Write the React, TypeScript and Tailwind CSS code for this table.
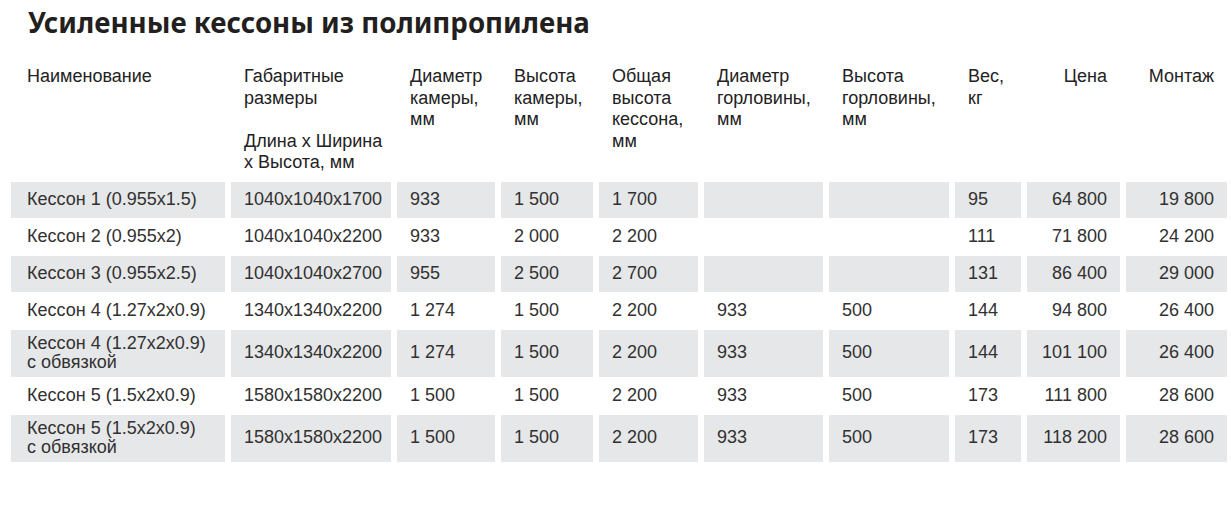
import React from 'react';

type Row = {
  name: string[];
  cells: string[];
};

const rows: Row[] = [
  { name: ['Кессон 1 (0.955x1.5)'], cells: ['1040x1040x1700', '933', '1 500', '1 700', '', '', '95', '64 800', '19 800'] },
  { name: ['Кессон 2 (0.955x2)'], cells: ['1040x1040x2200', '933', '2 000', '2 200', '', '', '111', '71 800', '24 200'] },
  { name: ['Кессон 3 (0.955x2.5)'], cells: ['1040x1040x2700', '955', '2 500', '2 700', '', '', '131', '86 400', '29 000'] },
  { name: ['Кессон 4 (1.27x2x0.9)'], cells: ['1340x1340x2200', '1 274', '1 500', '2 200', '933', '500', '144', '94 800', '26 400'] },
  { name: ['Кессон 4 (1.27x2x0.9)', 'с обвязкой'], cells: ['1340x1340x2200', '1 274', '1 500', '2 200', '933', '500', '144', '101 100', '26 400'] },
  { name: ['Кессон 5 (1.5x2x0.9)'], cells: ['1580x1580x2200', '1 500', '1 500', '2 200', '933', '500', '173', '111 800', '28 600'] },
  { name: ['Кессон 5 (1.5x2x0.9)', 'с обвязкой'], cells: ['1580x1580x2200', '1 500', '1 500', '2 200', '933', '500', '173', '118 200', '28 600'] },
];

const headers: string[][] = [
  ['Наименование'],
  ['Габаритные', 'размеры'],
  ['Диаметр', 'камеры,', 'мм'],
  ['Высота', 'камеры,', 'мм'],
  ['Общая', 'высота', 'кессона,', 'мм'],
  ['Диаметр', 'горловины,', 'мм'],
  ['Высота', 'горловины,', 'мм'],
  ['Вес,', 'кг'],
  ['Цена'],
  ['Монтаж'],
];

const isRight = (i: number) => i >= 8;

const App: React.FC = () => {
  return (
    <div className="min-h-screen w-[1231px] bg-white pl-[11px] pr-[4px] font-['Liberation_Sans',Arial,sans-serif]">
      {/* Title */}
      <h1 className="pl-[17px] pt-[5px] text-[27.7px] leading-[34px] font-bold text-[#231f20] font-['Noto_Sans',sans-serif]">
        Усиленные кессоны из полипропилена
      </h1>

      <div className="mt-[27px] grid grid-cols-[214px_160px_98px_92px_99px_119px_120px_66px_93px_101px] gap-x-[6px] gap-y-[1px] text-[18px] text-[#313131]">
        {/* Header */}
        {headers.map((lines, i) => (
          <div
            key={`h-${i}`}
            className={`${i === 0 ? 'pl-[16px] pr-[13px]' : 'px-[13px]'} pb-[7px] leading-[21.5px] whitespace-nowrap text-[#222] ${
              isRight(i) ? 'text-right' : 'text-left'
            }`}
          >
            {lines.map((l, j) => (
              <div key={j}>{l}</div>
            ))}
            {i === 1 && (
              <div className="mt-[21.5px]">
                <div>Длина х Ширина</div>
                <div>х Высота, мм</div>
              </div>
            )}
          </div>
        ))}

        {/* Body */}
        {rows.map((row, r) => {
          const bg = r % 2 === 0 ? 'bg-[#e6e7e8]' : 'bg-white';
          const values = [row.name, ...row.cells.map((c) => [c])];
          return values.map((lines, i) => (
            <div
              key={`r-${r}-${i}`}
              className={`${bg} flex min-h-[36px] flex-col justify-center ${i === 0 ? 'pl-[16px] pr-[13px]' : 'px-[13px]'} py-[4px] leading-[19.5px] ${
                isRight(i) ? 'items-end' : 'items-start'
              }`}
            >
              {lines.map((l, j) => (
                <span key={j} className="whitespace-nowrap">
                  {l}
                </span>
              ))}
            </div>
          ));
        })}
      </div>
    </div>
  );
};

export default App;
